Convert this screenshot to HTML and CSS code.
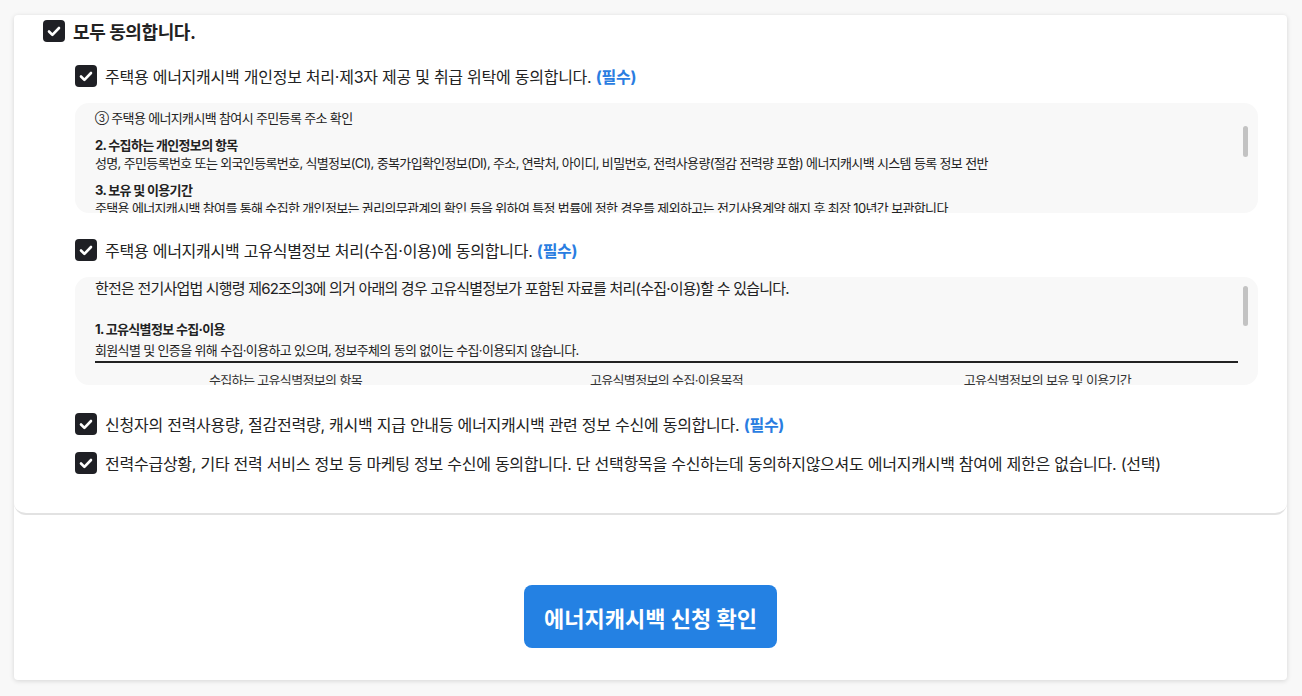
FILE: index.html
```html
<!DOCTYPE html>
<html lang="ko">
<head>
<meta charset="UTF-8">
<meta name="viewport" content="width=device-width, initial-scale=1.0">
<title>에너지캐시백 신청</title>
<link rel="stylesheet" href="styles.css">
</head>
<body>

<div class="page">
<div class="card">

  <div class="agree">

    <label class="row all">
      <svg class="chk" viewBox="0 0 22 22"><rect width="22" height="22" rx="4" fill="#1f2025"/><path d="M6 11.5l3.4 3.4L16 8" stroke="#fff" stroke-width="2.6" fill="none" stroke-linecap="round" stroke-linejoin="round"/></svg>
      <span>모두 동의합니다.</span>
    </label>

    <div class="list">

      <label class="row item">
        <svg class="chk" viewBox="0 0 22 22"><rect width="22" height="22" rx="4" fill="#1f2025"/><path d="M6 11.5l3.4 3.4L16 8" stroke="#fff" stroke-width="2.6" fill="none" stroke-linecap="round" stroke-linejoin="round"/></svg>
        <span>주택용 에너지캐시백 개인정보 처리·제3자 제공 및 취급 위탁에 동의합니다. <b class="req">(필수)</b></span>
      </label>

      <div class="terms terms1">
        <p><span class="num">③</span> 주택용 에너지캐시백 참여시 주민등록 주소 확인</p>
        <h4>2. 수집하는 개인정보의 항목</h4>
        <p>성명, 주민등록번호 또는 외국인등록번호, 식별정보(CI), 중복가입확인정보(DI), 주소, 연락처, 아이디, 비밀번호, 전력사용량(절감 전력량 포함) 에너지캐시백 시스템 등록 정보 전반</p>
        <h4>3. 보유 및 이용기간</h4>
        <p>주택용 에너지캐시백 참여를 통해 수집한 개인정보는 권리의무관계의 확인 등을 위하여 특정 법률에 정한 경우를 제외하고는 전기사용계약 해지 후 최장 10년간 보관합니다</p>
        <div class="thumb thumb1"></div>
      </div>

      <label class="row item item2">
        <svg class="chk" viewBox="0 0 22 22"><rect width="22" height="22" rx="4" fill="#1f2025"/><path d="M6 11.5l3.4 3.4L16 8" stroke="#fff" stroke-width="2.6" fill="none" stroke-linecap="round" stroke-linejoin="round"/></svg>
        <span>주택용 에너지캐시백 고유식별정보 처리(수집·이용)에 동의합니다. <b class="req">(필수)</b></span>
      </label>

      <div class="terms terms2">
        <p class="lead">한전은 전기사업법 시행령 제62조의3에 의거 아래의 경우 고유식별정보가 포함된 자료를 처리(수집·이용)할 수 있습니다.</p>
        <h4>1. 고유식별정보 수집·이용</h4>
        <p>회원식별 및 인증을 위해 수집·이용하고 있으며, 정보주체의 동의 없이는 수집·이용되지 않습니다.</p>
        <table>
          <thead>
            <tr>
              <th>수집하는 고유식별정보의 항목</th>
              <th>고유식별정보의 수집·이용목적</th>
              <th>고유식별정보의 보유 및 이용기간</th>
            </tr>
          </thead>
        </table>
        <div class="thumb thumb2"></div>
      </div>

      <label class="row item item3">
        <svg class="chk" viewBox="0 0 22 22"><rect width="22" height="22" rx="4" fill="#1f2025"/><path d="M6 11.5l3.4 3.4L16 8" stroke="#fff" stroke-width="2.6" fill="none" stroke-linecap="round" stroke-linejoin="round"/></svg>
        <span>신청자의 전력사용량, 절감전력량, 캐시백 지급 안내등 에너지캐시백 관련 정보 수신에 동의합니다. <b class="req">(필수)</b></span>
      </label>

      <label class="row item item4">
        <svg class="chk" viewBox="0 0 22 22"><rect width="22" height="22" rx="4" fill="#1f2025"/><path d="M6 11.5l3.4 3.4L16 8" stroke="#fff" stroke-width="2.6" fill="none" stroke-linecap="round" stroke-linejoin="round"/></svg>
        <span>전력수급상황, 기타 전력 서비스 정보 등 마케팅 정보 수신에 동의합니다. 단 선택항목을 수신하는데 동의하지않으셔도 에너지캐시백 참여에 제한은 없습니다. (선택)</span>
      </label>

    </div>
  </div>

  <div class="submit">
    <button class="btn">에너지캐시백 신청 확인</button>
  </div>

</div>
</div>

</body>
</html>
```

FILE: styles.css
```css
body {
  margin: 0;
  background: #f8f8f8;
  font-family: "Inter", "Noto Sans CJK KR", sans-serif;
  color: #222;
}

.page {
  padding: 15px 15px 16px 14px;
}

.card {
  background: white;
  border-radius: 4px;
  box-shadow: 0 1px 5px rgba(0,0,0,0.14);
}

.agree {
  padding: 5px 29px 38px;
  border-bottom: 2px solid #e2e2e2;
  border-radius: 0 0 12px 12px;
}

.row {
  display: flex;
  align-items: center;
  gap: 8px;
  cursor: pointer;
}

.chk {
  width: 22px;
  height: 22px;
  flex-shrink: 0;
}

.all {
  height: 22px;
  font-size: 18px;
  font-weight: bold;
  letter-spacing: -0.4px;
}

.list {
  padding-left: 32px;
}

.item {
  height: 24px;
  margin-top: 22px;
  font-size: 16px;
  letter-spacing: -0.25px;
}

.req {
  color: #2a7de1;
}

.item2 {
  margin-top: 25px;
}

.item3 {
  margin-top: 27px;
}

.item4 {
  margin-top: 15px;
}

.terms {
  position: relative;
  box-sizing: border-box;
  margin-top: 15px;
  height: 110px;
  overflow: hidden;
  background: #f8f8f8;
  border-radius: 14px;
  padding: 0 20px;
  font-size: 13px;
  line-height: 18px;
  letter-spacing: -0.65px;
  color: #222;
}

.terms p,
.terms h4 {
  margin: 0;
}

.terms h4 {
  font-weight: bold;
}

.num {
  font-size: 10px;
  vertical-align: 1px;
}

.terms1 {
  padding-top: 6px;
}

.terms1 h4 {
  margin-top: 9px;
}

.terms2 {
  height: 108px;
  padding-top: 1px;
  line-height: 21px;
}

.terms2 .lead {
  font-size: 15px;
  line-height: 22px;
  letter-spacing: -0.8px;
}

.terms2 h4 {
  margin-top: 19px;
}

.terms table {
  width: 100%;
  border-collapse: collapse;
  border-top: 2px solid #222;
  table-layout: fixed;
}

.terms th {
  font-weight: normal;
  font-size: 13px;
  line-height: 18px;
  padding: 8px 4px;
  color: #333;
}

.thumb {
  position: absolute;
  right: 10px;
  width: 5px;
  border-radius: 3px;
  background: #c3c3c3;
}

.thumb1 {
  top: 23px;
  height: 31px;
}

.thumb2 {
  top: 9px;
  height: 40px;
}

.submit {
  padding: 70px 0 32px;
  text-align: center;
}

.btn {
  width: 253px;
  height: 63px;
  border: none;
  border-radius: 8px;
  background: #2481e3;
  color: white;
  font-family: inherit;
  font-size: 22px;
  font-weight: bold;
  cursor: pointer;
}
```
